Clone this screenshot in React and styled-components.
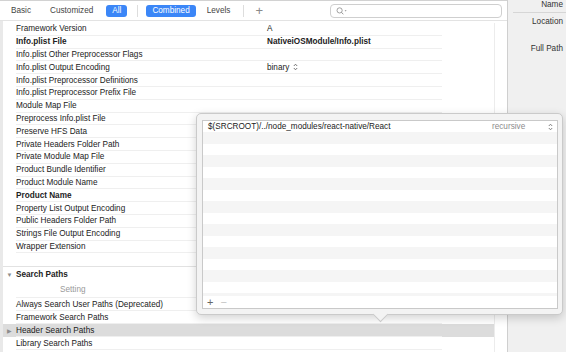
import React from "react";
import styled, { createGlobalStyle } from "styled-components";

const GlobalStyle = createGlobalStyle`
  html, body {
    margin: 0;
    padding: 0;
    background: #ffffff;
  }
  body {
    font-family: "Liberation Sans", Arial, sans-serif;
    font-size: 8.2px;
    color: #222222;
  }
  * {
    box-sizing: border-box;
  }
`;

const Window = styled.div`
  position: relative;
  width: 566px;
  height: 352px;
  overflow: hidden;
  display: flex;
  background: #ffffff;
`;

const Main = styled.div`
  width: 508px;
  display: flex;
  flex-direction: column;
  border-right: 1px solid #cfcfcf;
`;

const Toolbar = styled.div`
  height: 21px;
  display: flex;
  align-items: center;
  padding: 1px 0 0 11px;
  border-top: 1px solid #d2d2d2;
  border-bottom: 1px solid #e3e3e3;
`;

const Tab = styled.div`
  height: 12px;
  line-height: 12px;
  padding: 0 ${({ active }) => (active ? "6px" : "0")};
  margin-right: ${({ gap }) => gap}px;
  border-radius: 3px;
  color: ${({ active }) => (active ? "#ffffff" : "#444444")};
  background: ${({ active }) => (active ? "#3b86f7" : "transparent")};
  white-space: nowrap;
`;

const ToolSep = styled.div`
  width: 1px;
  height: 12px;
  background: #dddddd;
  margin-right: ${({ gap }) => gap}px;
`;

const AddTab = styled.div`
  color: #8a8a8a;
  font-size: 13px;
  line-height: 12px;
  font-weight: 300;
  margin-right: 67px;
`;

const Search = styled.div`
  width: 172px;
  height: 14px;
  border: 1px solid #cfcfcf;
  border-radius: 4px;
  display: flex;
  align-items: center;
  padding-left: 5px;
`;

const Body = styled.div`
  flex: 1;
  display: flex;
  padding-top: 2px;
  border-left: 3px solid #e9e9e9;
`;

const Table = styled.div`
  width: 492px;
  border-right: 1px solid #ececec;
  display: flex;
  flex-direction: column;
`;

const Row = styled.div`
  height: ${({ h }) => h || 12.8}px;
  flex-shrink: 0;
  display: flex;
  align-items: stretch;
  background: ${({ selected }) => (selected ? "#dcdcdc" : "transparent")};
`;

const Disclosure = styled.div`
  width: 13px;
  display: flex;
  align-items: center;
  justify-content: center;
  color: #8d8d8d;
  font-size: 6px;
`;

const RowInner = styled.div`
  width: 426px;
  display: grid;
  grid-template-columns: 251px 1fr;
  align-items: center;
  border-bottom: 1px solid ${({ line }) => (line ? "#efefef" : "transparent")};
  font-weight: ${({ bold }) => (bold ? 700 : 400)};
  white-space: nowrap;
`;

const Value = styled.div`
  display: flex;
  align-items: center;
  gap: 4px;
`;

const Spacer = styled.div`
  height: 14px;
  flex-shrink: 0;
  border-bottom: 1px solid #e2e2e2;
`;

const SectionTitle = styled.div`
  display: flex;
  align-items: center;
  font-weight: 700;
`;

const ColumnLabel = styled.div`
  padding-left: 44px;
  color: #9a9a9a;
  display: flex;
  align-items: center;
`;

const Gutter = styled.div`
  flex: 1;
`;

const Inspector = styled.div`
  flex: 1;
  background: #f0f0f0;
  display: flex;
  flex-direction: column;
  align-items: stretch;
  padding-left: 5px;
`;

const InspectorLabel = styled.div`
  text-align: right;
  padding-right: 3px;
  line-height: 9px;
  color: #333333;
  margin-top: ${({ top }) => top || 0}px;
  height: ${({ h }) => (h ? `${h}px` : "auto")};
  border-bottom: ${({ line }) => (line ? "1px solid #d6d6d6" : "none")};
  white-space: nowrap;
`;

const Popover = styled.div`
  position: absolute;
  left: 196px;
  top: 113px;
  width: 367px;
  height: 202px;
  background: #f3f3f3;
  border: 1px solid #cacaca;
  border-radius: 5px;
  box-shadow: 0 3px 10px rgba(0, 0, 0, 0.18);
  padding: 6px 4px 5px 5px;
  display: flex;
`;

const Arrow = styled.div`
  position: absolute;
  left: 178px;
  bottom: -6px;
  width: 11px;
  height: 11px;
  background: #f3f3f3;
  border-right: 1px solid #cacaca;
  border-bottom: 1px solid #cacaca;
  transform: rotate(45deg);
`;

const PathTable = styled.div`
  flex: 1;
  border: 1px solid #c9c9c9;
  background: #ffffff;
  display: flex;
  flex-direction: column;
  position: relative;
  z-index: 1;
`;

const PathRows = styled.div`
  flex: 1;
  overflow: hidden;
  background: repeating-linear-gradient(
    #ffffff 0,
    #ffffff 11.5px,
    #f5f5f5 11.5px,
    #f5f5f5 23px
  );
`;

const PathRow = styled.div`
  height: 11.5px;
  display: flex;
  align-items: center;
  padding: 0 4px 0 5px;
  white-space: nowrap;
`;

const PathText = styled.div`
  flex: 1;
`;

const PathMode = styled.div`
  color: #8c8c8c;
  width: 56px;
`;

const Footer = styled.div`
  height: 12px;
  background: #ffffff;
  display: flex;
  align-items: center;
  gap: 7px;
  padding-left: 4px;
  color: #777777;
  font-size: 11px;
  font-weight: 300;
`;

const FooterBtn = styled.span`
  color: ${({ disabled }) => (disabled ? "#c4c4c4" : "#666666")};
  line-height: 10px;
`;

const UpDown = ({ color = "#555" }) => (
  <svg width="5" height="8" viewBox="0 0 5 8">
    <path d="M0.8 3 L2.5 1.2 L4.2 3" fill="none" stroke={color} strokeWidth="0.8" />
    <path d="M0.8 5 L2.5 6.8 L4.2 5" fill="none" stroke={color} strokeWidth="0.8" />
  </svg>
);

const SearchIcon = () => (
  <svg width="12" height="8" viewBox="0 0 12 8">
    <circle cx="3.6" cy="3.4" r="2.6" fill="none" stroke="#8a8a8a" strokeWidth="0.8" />
    <path d="M5.5 5.3 L7.3 7.3" stroke="#8a8a8a" strokeWidth="0.9" />
    <path d="M8.6 3.2 L10.6 3.2 L9.6 4.4 Z" fill="#8a8a8a" />
  </svg>
);

const settings = [
  { name: "Framework Version", value: "A" },
  { name: "Info.plist File", value: "NativeiOSModule/Info.plist", bold: true },
  { name: "Info.plist Other Preprocessor Flags" },
  { name: "Info.plist Output Encoding", value: "binary", select: true },
  { name: "Info.plist Preprocessor Definitions" },
  { name: "Info.plist Preprocessor Prefix File" },
  { name: "Module Map File" },
  { name: "Preprocess Info.plist File" },
  { name: "Preserve HFS Data" },
  { name: "Private Headers Folder Path" },
  { name: "Private Module Map File" },
  { name: "Product Bundle Identifier" },
  { name: "Product Module Name" },
  { name: "Product Name", bold: true },
  { name: "Property List Output Encoding" },
  { name: "Public Headers Folder Path" },
  { name: "Strings File Output Encoding" },
  { name: "Wrapper Extension" },
];

const searchPaths = [
  { name: "Always Search User Paths (Deprecated)" },
  { name: "Framework Search Paths" },
  { name: "Header Search Paths", selected: true, expandable: true },
  { name: "Library Search Paths" },
];

const SettingRow = ({ item, h }) => (
  <Row h={h} selected={item.selected}>
    <Disclosure>{item.expandable ? "▶" : ""}</Disclosure>
    <RowInner line bold={item.bold}>
      <div>{item.name}</div>
      <Value>
        {item.value}
        {item.select && <UpDown />}
      </Value>
    </RowInner>
  </Row>
);

export default function App() {
  return (
    <Window>
      <GlobalStyle />
      <Main>
        <Toolbar>
          <Tab gap={19}>Basic</Tab>
          <Tab gap={13}>Customized</Tab>
          <Tab active gap={10}>All</Tab>
          <ToolSep gap={8} />
          <Tab active gap={11}>Combined</Tab>
          <Tab gap={13}>Levels</Tab>
          <ToolSep gap={11} />
          <AddTab>+</AddTab>
          <Search>
            <SearchIcon />
          </Search>
        </Toolbar>
        <Body>
          <Table>
            {settings.map((item) => (
              <SettingRow key={item.name} item={item} />
            ))}
            <Spacer />
            <Row h={15}>
              <Disclosure>▼</Disclosure>
              <SectionTitle>Search Paths</SectionTitle>
            </Row>
            <Row h={16}>
              <Disclosure />
              <RowInner line>
                <ColumnLabel>Setting</ColumnLabel>
              </RowInner>
            </Row>
            {searchPaths.map((item) => (
              <SettingRow key={item.name} item={item} h={13} />
            ))}
          </Table>
          <Gutter />
        </Body>
      </Main>
      <Inspector>
        <InspectorLabel h={13} line>Name</InspectorLabel>
        <InspectorLabel top={4}>Location</InspectorLabel>
        <InspectorLabel top={18}>Full Path</InspectorLabel>
      </Inspector>
      <Popover>
        <Arrow />
        <PathTable>
          <PathRows>
            <PathRow>
              <PathText>$(SRCROOT)/../node_modules/react-native/React</PathText>
              <PathMode>recursive</PathMode>
              <UpDown color="#666" />
            </PathRow>
          </PathRows>
          <Footer>
            <FooterBtn>+</FooterBtn>
            <FooterBtn disabled>−</FooterBtn>
          </Footer>
        </PathTable>
      </Popover>
    </Window>
  );
}
